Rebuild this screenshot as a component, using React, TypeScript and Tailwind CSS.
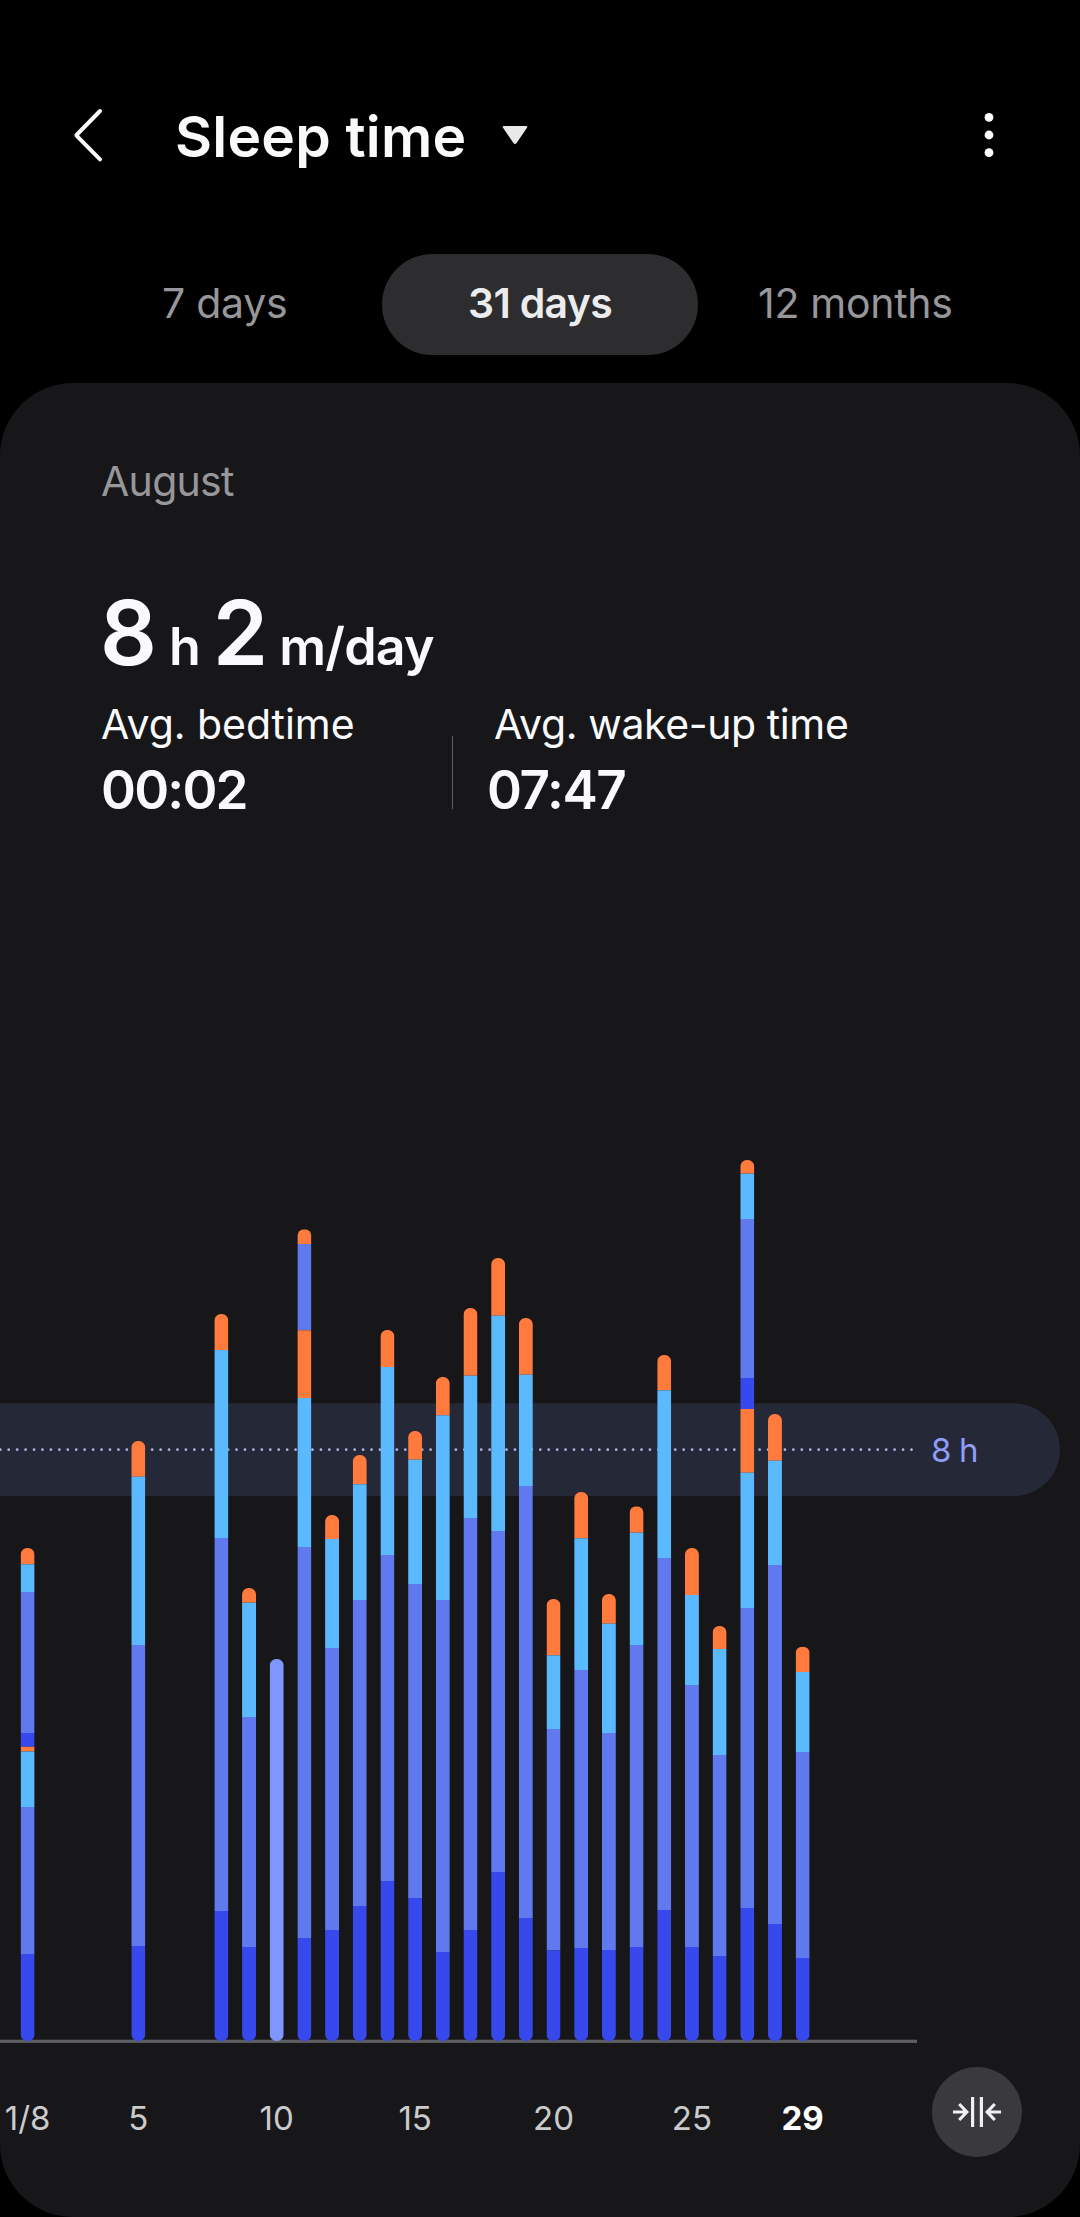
import { useState } from "react"

type Stage = "awake" | "rem" | "light" | "deep" | "manual"

interface SleepDay {
  day: number
  // [stage, top edge], from the top of the bar to the bottom
  parts: [Stage, number][]
}

const STAGE_COLORS: Record<Stage, string> = {
  awake: "#ff7a3d",
  rem: "#5bbaff",
  light: "#6079ee",
  deep: "#3748ec",
  manual: "#8096ff",
}

const BASELINE = 2041
const BAR_WIDTH = 14
const FIRST_X = 27.6
const DAY_STEP = 27.68

const night = (day: number, awake: number, rem: number, light: number, deep: number): SleepDay => ({
  day,
  parts: [["awake", awake], ["rem", rem], ["light", light], ["deep", deep]],
})

const days: SleepDay[] = [
  {
    day: 1,
    parts: [
      ["awake", 1548], ["rem", 1564.3], ["light", 1592], ["deep", 1733],
      ["awake", 1746.8], ["rem", 1751.5], ["light", 1807], ["deep", 1954],
    ],
  },
  night(5, 1441, 1476.7, 1645, 1946),
  night(8, 1314, 1350, 1538, 1911),
  night(9, 1588, 1602.7, 1717, 1947),
  { day: 10, parts: [["manual", 1659]] },
  {
    day: 11,
    parts: [
      ["awake", 1229.3], ["light", 1244], ["awake", 1330.3],
      ["rem", 1398], ["light", 1547], ["deep", 1938],
    ],
  },
  night(12, 1515, 1539, 1648, 1930),
  night(13, 1455, 1484.3, 1600, 1906),
  night(14, 1330, 1367, 1555, 1881),
  night(15, 1431, 1459.7, 1584, 1898),
  night(16, 1377, 1415.3, 1600, 1952),
  night(17, 1308, 1375.7, 1518, 1930),
  night(18, 1258, 1315.7, 1531, 1872),
  night(19, 1318, 1374.7, 1486, 1918),
  night(20, 1599, 1655.3, 1729, 1950.5),
  night(21, 1492, 1538.3, 1670, 1948),
  night(22, 1594, 1623.7, 1733, 1950),
  night(23, 1506.3, 1532.7, 1645, 1947),
  night(24, 1355, 1390.3, 1558, 1910),
  night(25, 1548, 1595, 1685, 1947),
  night(26, 1626, 1649, 1755, 1956),
  {
    day: 27,
    parts: [
      ["awake", 1160], ["rem", 1173.7], ["light", 1219], ["deep", 1378],
      ["awake", 1409], ["rem", 1472.7], ["light", 1608], ["deep", 1908],
    ],
  },
  night(28, 1414, 1460.7, 1565, 1924),
  night(29, 1646.7, 1672, 1752, 1958),
]

const ticks = [
  { day: 1, label: "1/8" },
  { day: 5, label: "5" },
  { day: 10, label: "10" },
  { day: 15, label: "15" },
  { day: 20, label: "20" },
  { day: 25, label: "25" },
  { day: 29, label: "29" },
]

const tabs = ["7 days", "31 days", "12 months"]

const xOf = (day: number) => FIRST_X + (day - 1) * DAY_STEP

function Bar({ day, parts }: SleepDay) {
  const x = xOf(day) - BAR_WIDTH / 2
  const top = parts[0][1]
  return (
    <g clipPath={`url(#bar-${day})`}>
      <clipPath id={`bar-${day}`}>
        <rect x={x} y={top} width={BAR_WIDTH} height={BASELINE - top} rx={6.5} />
      </clipPath>
      {parts.map(([stage, y], i) => {
        const end = i < parts.length - 1 ? parts[i + 1][1] : BASELINE
        return <rect key={i} x={x} y={y} width={BAR_WIDTH} height={end - y} fill={STAGE_COLORS[stage]} />
      })}
    </g>
  )
}

function SleepChart() {
  return (
    <svg viewBox="0 1100 1080 1117" width="1080" height="1117" className="block">
      {/* Goal band */}
      <rect x={-60} y={1403.3} width={1120} height={92.7} rx={46.3} fill="#252836" />
      <line
        x1={0.3}
        x2={912}
        y1={1449.7}
        y2={1449.7}
        stroke="#a9b0e6"
        strokeWidth={2.8}
        strokeLinecap="round"
        strokeDasharray="0 8.437"
      />
      <text x={931} y={1462} fontSize={33} fill="#909cf8" className="tracking-[-0.8px]">8 h</text>

      {/* Axis */}
      <rect x={0} y={2039.7} width={917} height={3.2} fill="#5f5f61" />

      {days.map((d) => (
        <Bar key={d.day} {...d} />
      ))}

      {ticks.map((t) => (
        <text
          key={t.day}
          x={xOf(t.day)}
          y={2130}
          fontSize={33}
          textAnchor="middle"
          fill={t.day === 29 ? "#ffffff" : "#cbcbcd"}
          fontWeight={t.day === 29 ? 700 : 400}
        >
          {t.label}
        </text>
      ))}
    </svg>
  )
}

export default function App() {
  const [tab, setTab] = useState("31 days")

  return (
    <div className="w-[1080px] h-[2217px] overflow-hidden bg-black text-[#fafafc] font-['Inter',sans-serif]">

      {/* Header */}
      <header className="flex items-center pt-20 h-[190px]">
        <button className="ml-[73px]" aria-label="Back">
          <svg width="32" height="56" viewBox="0 0 32 56" fill="none" stroke="#fafafc" strokeWidth="4" strokeLinecap="round" strokeLinejoin="round">
            <path d="M27 4 L4 27.5 Q3.2 28.3 4 29.1 L27 52.3" />
          </svg>
        </button>
        <h1 className="ml-[70px] mt-[2px] text-[57px] leading-none font-semibold tracking-[0.2px] whitespace-nowrap">Sleep time</h1>
        <svg className="ml-9 shrink-0" width="26" height="20" viewBox="0 0 26 20" fill="#e9e9eb">
          <path d="M2 1 H24 Q26 1 25 2.8 L14.6 18 Q13 20 11.4 18 L1 2.8 Q0 1 2 1 Z" />
        </svg>
        <button className="ml-auto mr-[83px]" aria-label="More options">
          <svg width="16" height="48" viewBox="0 0 16 48" fill="#fff">
            <circle cx="8" cy="6.3" r="4.4" />
            <circle cx="8" cy="24" r="4.4" />
            <circle cx="8" cy="41.7" r="4.4" />
          </svg>
        </button>
      </header>

      {/* Range tabs */}
      <nav className="grid grid-cols-3 mt-16 mx-[67px] h-[101px]">
        {tabs.map((t) => (
          <button
            key={t}
            onClick={() => setTab(t)}
            className={`rounded-full pb-[3px] text-[41px] leading-none whitespace-nowrap ${
              t === tab
                ? "bg-[#2d2d2f] text-[#ececee] font-semibold tracking-[-0.7px]"
                : "text-[#979799] tracking-[-0.3px]"
            }`}
          >
            {t}
          </button>
        ))}
      </nav>

      <main className="relative mt-7 h-[1834px] pt-[78px] rounded-[73px] overflow-hidden bg-[#171719]">
        <p className="ml-[101px] text-[41px] leading-none text-[#979799] tracking-[-0.7px]">August</p>

        {/* Average duration */}
        <div className="flex items-baseline ml-[100px] mt-[86px] h-[89px] leading-none font-semibold whitespace-nowrap">
          <span className="text-[89px] leading-none">8</span>
          <span className="ml-3 text-[52px] leading-none">h</span>
          <span className="ml-3 text-[89px] leading-none">2</span>
          <span className="ml-[11px] text-[52px] leading-none tracking-[-0.8px]">m/day</span>
        </div>

        <div className="flex mt-[27px] h-[112px] whitespace-nowrap">
          <div className="w-[350px] pl-[101px]">
            <p className="text-[41px] leading-none tracking-[-0.05px]">Avg. bedtime</p>
            <p className="mt-[19px] text-[53px] leading-none font-semibold tracking-[-1.8px]">00:02</p>
          </div>
          <div className="ml-[102px] mt-8 h-[73px] w-px bg-[#606062]" />
          <div className="ml-[34px]">
            <p className="ml-[7px] text-[41px] leading-none tracking-[-0.4px]">Avg. wake-up time</p>
            <p className="mt-[19px] text-[53px] leading-none font-semibold tracking-[-1.4px]">07:47</p>
          </div>
        </div>

        <div className="mt-[284px]">
          <SleepChart />
        </div>

        {/* Zoom out button, floats over the chart */}
        <button
          aria-label="Collapse chart"
          className="absolute right-[58px] bottom-[60px] size-[90px] rounded-full bg-[#3a3a3c] flex items-center justify-center"
        >
          <svg width="50" height="32" viewBox="0 0 50 32" fill="none" stroke="#efeff1" strokeWidth="3.2">
            <path d="M1 16 H14 M7.2 8 L14.8 16 L7.2 24" />
            <path d="M20.6 1 V31 M29.4 1 V31" />
            <path d="M49 16 H36 M42.8 8 L35.2 16 L42.8 24" />
          </svg>
        </button>
      </main>
    </div>
  )
}
